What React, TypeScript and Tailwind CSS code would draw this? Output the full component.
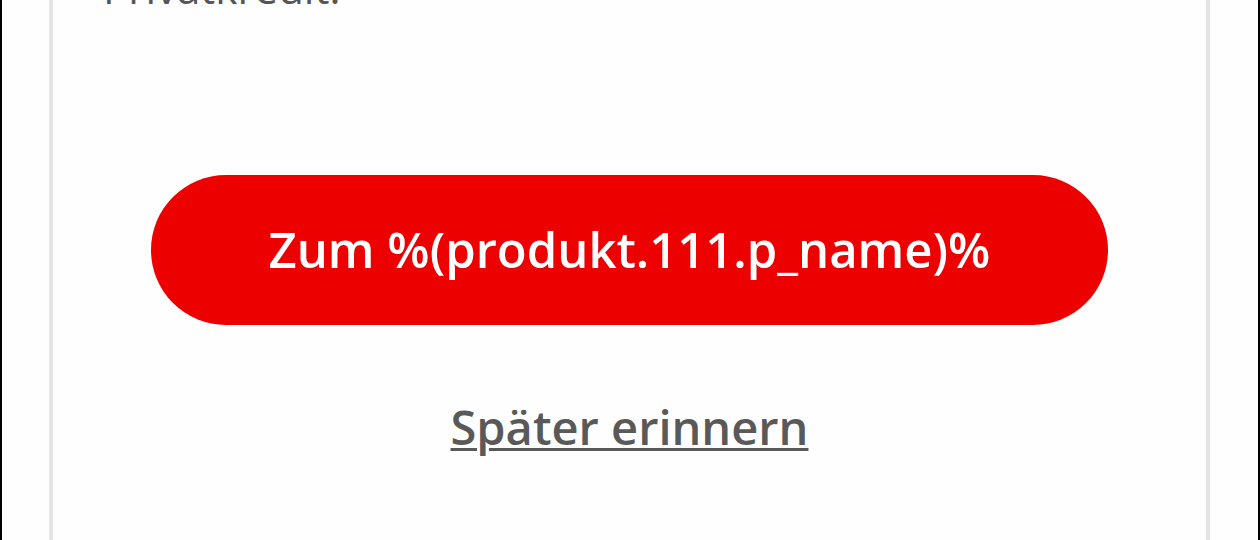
import React from "react";

const font = { fontFamily: '"Open Sans", "Noto Sans", sans-serif' };

export default function App() {
  return (
    <div className="h-[540px] w-[1260px] overflow-hidden bg-[#fefefe] border-l-2 border-r-2 border-black" style={font}>
      <div className="ml-[47px] mr-[48px] flex h-full flex-col border-x-4 border-[#e4e4e4] bg-[#fefefe] px-[50px]">
        {/* copy is scrolled off the top */}
        <p className="-mt-[40px] text-[42px] leading-[56px] text-[#555555]">Privatkredit.</p>

        <div className="mt-[159px] px-[48px]">
          <button className="flex h-[150px] w-full items-center justify-center rounded-full bg-[#ec0000] text-[49px] font-semibold text-white">
            Zum %(produkt.111.p_name)%
          </button>
        </div>

        <div className="mt-[72px] flex justify-center">
          <a className="text-[47px] font-semibold leading-[60px] text-[#595959] underline decoration-[3px] underline-offset-[3px]">
            Später erinnern
          </a>
        </div>
      </div>
    </div>
  );
}
